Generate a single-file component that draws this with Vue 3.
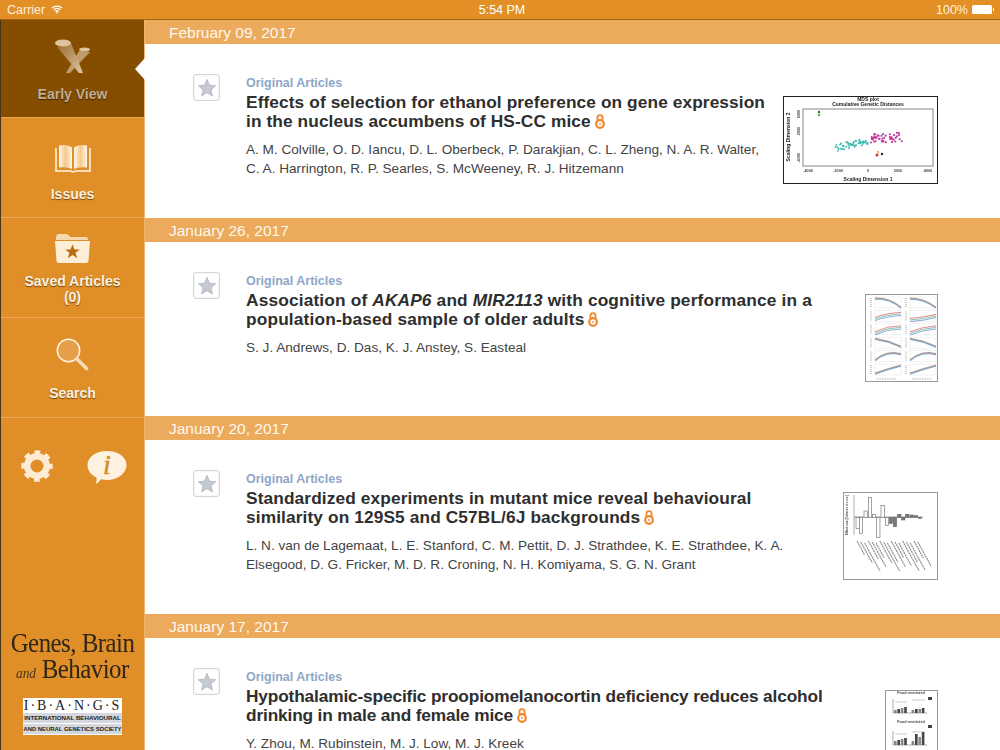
<script setup>
const articles = [
  { date: 'February 09, 2017', title: ['Effects of selection for ethanol preference on gene expression in the nucleus accumbens of HS-CC mice'], authors: 'A. M. Colville, O. D. Iancu, D. L. Oberbeck, P. Darakjian, C. L. Zheng, N. A. R. Walter, C. A. Harrington, R. P. Searles, S. McWeeney, R. J. Hitzemann', fig: 'mds' },
  { date: 'January 26, 2017', title: ['Association of ', 'AKAP6', ' and ', 'MIR2113', ' with cognitive performance in a population-based sample of older adults'], authors: 'S. J. Andrews, D. Das, K. J. Anstey, S. Easteal', fig: 'curves' },
  { date: 'January 20, 2017', title: ['Standardized experiments in mutant mice reveal behavioural similarity on 129S5 and C57BL/6J backgrounds'], authors: 'L. N. van de Lagemaat, L. E. Stanford, C. M. Pettit, D. J. Strathdee, K. E. Strathdee, K. A. Elsegood, D. G. Fricker, M. D. R. Croning, N. H. Komiyama, S. G. N. Grant', fig: 'bars' },
  { date: 'January 17, 2017', title: ['Hypothalamic-specific proopiomelanocortin deficiency reduces alcohol drinking in male and female mice'], authors: 'Y. Zhou, M. Rubinstein, M. J. Low, M. J. Kreek', fig: 'groups' }
]

const rnd = (i, s) => {
  const v = Math.sin(i * 12.9898 + s * 78.233) * 43758.5453
  return v - Math.floor(v)
}
const teal = Array.from({ length: 52 }, (_, i) => {
  const t = rnd(i, 1)
  return { x: 52 + t * 33, y: 52 - t * 7 + (rnd(i, 2) - 0.5) * 7 }
})
const magenta = Array.from({ length: 46 }, (_, i) => {
  const t = rnd(i, 3)
  return { x: 87 + t * 32, y: 43 - t * 2 + (rnd(i, 4) - 0.5) * 9 }
})

const curveRows = [
  ['M0 1Q14 0 26 10', 'M0 1Q14 1 26 10'],
  ['M0 7Q10 3 26 2', 'M0 8Q14 7 26 4'],
  ['M0 8Q12 2 26 2', 'M0 8Q12 3 26 2'],
  ['M0 1Q14 3 26 9', 'M0 1Q14 3 26 9'],
  ['M0 9Q12 -1 26 3', 'M0 9Q12 -1 26 3'],
  ['M0 9Q14 4 26 1', 'M0 9Q14 4 26 1']
]
const curvePanels = curveRows.flatMap((row, r) => row.map((d, c) => ({ x: 10 + c * 35, y: 3 + r * 13.4, d, spread: r === 1 || r === 2 ? 1.6 : 0.6 })))
const curveColours = ['#d8555f', '#4fb08f', '#5a86c8']

const barData = [
  [63, 130], [73, 145], [87, 78], [100, 38], [112, 88], [125, 157], [138, 62], [151, 122],
  [163, 115, 1], [175, 125, 1], [188, 88, 1], [200, 105, 1], [212, 88, 1], [225, 90, 1], [238, 92, 1], [250, 100, 1]
].map(([zx, zy, dark]) => ({
  x: zx / 3 - 8,
  y: Math.min(zy, 97) / 3 - 7,
  h: Math.abs(zy - 97) / 3,
  dark
}))
const labels = Array.from({ length: 17 }, (_, i) => ({ x: 14 + i * 3.8, y: 49 + (i % 3), len: 14 + ((i * 7) % 17) }))

const groupRows = [
  { base: 23, title: 4, legend: 7, bars: [3, 4, 5, 6, 3, 4, 4, 5] },
  { base: 55, title: 33, legend: 35, bars: [4, 5, 6, 7, 4, 11, 8, 13] }
]
</script>

<template>
  <div class="screen">
    <header class="status">
      <div class="status-left">
        <span>Carrier</span>
        <svg class="wifi" viewBox="0 0 14 10" width="12" height="9">
          <path d="M1 3.400a8.600 8.600 0 0 1 12 0M3 5.400a5.800 5.800 0 0 1 8 0M5 7.300a3 3 0 0 1 4 0" fill="none" stroke="#fff" stroke-width="1.500" />
          <path d="M7 10l-1.300-1.500a2 2 0 0 1 2.600 0z" fill="#fff" />
        </svg>
      </div>
      <div class="status-time">5:54 PM</div>
      <div class="status-right">
        <span>100%</span>
        <span class="battery"></span>
      </div>
    </header>

    <div class="body">
      <aside class="side">
        <div class="nav nav-active">
          <svg viewBox="0 0 36 36" width="36" height="36">
            <defs>
              <linearGradient id="beam" x1="0" y1="0" x2="1" y2="1">
                <stop offset="0" stop-color="#99682c" />
                <stop offset="1" stop-color="#dfc6a4" />
              </linearGradient>
            </defs>
            <path d="M24 13L35 14L15 35H11z" fill="#d8bd98" opacity=".7" />
            <path d="M2 9L16 5L28 35H24z" fill="url(#beam)" />
            <ellipse cx="8" cy="5" rx="8" ry="3.600" fill="#dcc3a0" />
            <ellipse cx="29.500" cy="11.500" rx="5.500" ry="2.100" fill="#dcc3a0" />
          </svg>
          <span class="nav-label">Early View</span>
          <span class="notch"></span>
        </div>
        <div class="nav nav-issues">
          <svg viewBox="0 0 36 30" width="36" height="30">
            <defs>
              <linearGradient id="page" x1="0" y1="0" x2="1" y2="0">
                <stop offset="0" stop-color="#fff6e8" />
                <stop offset=".5" stop-color="#f8c98c" />
                <stop offset="1" stop-color="#fff6e8" />
              </linearGradient>
            </defs>
            <path d="M4 1.500Q12 0 17 3.500V25Q12 22.500 4 23.500z" fill="url(#page)" />
            <path d="M19 3.500Q24 0 32 1.500V23.500Q24 22.500 19 25z" fill="url(#page)" />
            <path d="M1 4V27H16Q18 29 20 27H35V4" fill="none" stroke="#fff3e2" stroke-width="1.600" />
          </svg>
          <span class="nav-label">Issues</span>
        </div>
        <div class="nav nav-saved">
          <svg viewBox="0 0 35 30" width="35" height="30">
            <path d="M1 5Q1 1 4 1H12L15.500 4H31Q33 4 33 7H1z" fill="#f5d8ac" />
            <path d="M0 8H35L33.500 28Q33.400 30 31 30H4Q1.600 30 1.500 28z" fill="#fdeed8" />
            <path d="M17.500 11.500l2 5h5.300l-4.300 3.300 1.700 5.400-4.700-3.300-4.700 3.300 1.700-5.400-4.300-3.300h5.300z" fill="#b96c0c" />
          </svg>
          <span class="nav-label">Saved Articles<br />(0)</span>
        </div>
        <div class="nav nav-search">
          <svg viewBox="0 0 33 33" width="33" height="33">
            <circle cx="12.500" cy="12.500" r="11.200" fill="#e69f49" stroke="#fff3e2" stroke-width="1.500" />
            <path d="M21 21L30.500 30.500" stroke="#f8dcb8" stroke-width="3.600" stroke-linecap="round" />
          </svg>
          <span class="nav-label">Search</span>
        </div>
        <div class="tools">
          <svg viewBox="0 0 32 32" width="32" height="32">
            <circle cx="16" cy="16" r="9.750" fill="none" stroke="#fdebd4" stroke-width="6.500" />
            <circle cx="16" cy="16" r="13.500" fill="none" stroke="#fdebd4" stroke-width="4.500" stroke-dasharray="5.600 5" stroke-dashoffset="2.800" />
          </svg>
          <svg viewBox="0 0 40 36" width="40" height="36">
            <path d="M20 1C31 1 39.500 7 39.500 15S31 30 20 30Q17 30 14 29.300Q12 32.500 8.500 34Q10 31 9.500 27.500C4 25 .5 20.500 .5 15C.5 7 9 1 20 1z" fill="#fdf1e0" />
            <text x="20" y="24" text-anchor="middle" class="info-i">i</text>
          </svg>
        </div>
        <div class="brand">
          <div class="brand-line">Genes, Brain</div>
          <div class="brand-line"><i>and</i> Behavior</div>
          <div class="ibangs">
            <div class="ibangs-name">I·B·A·N·G·S</div>
            <div class="ibangs-sub sub-one">INTERNATIONAL BEHAVIOURAL</div>
            <div class="ibangs-sub sub-two">AND NEURAL GENETICS SOCIETY</div>
          </div>
        </div>
      </aside>

      <main class="list">
        <section v-for="a in articles" :key="a.date" class="group">
          <h2 class="date">{{ a.date }}</h2>
          <article class="article" :class="'article-' + a.fig">
            <button class="star" aria-label="Save article">
              <svg viewBox="0 0 22 22" width="20" height="20">
                <path d="M11 1.500l2.700 6.400 6.900.6-5.200 4.500 1.600 6.800L11 16.200 5 19.800l1.600-6.800L1.400 8.500l6.900-.6z" fill="#c5cad2" stroke="#a9afba" stroke-width=".8" />
              </svg>
            </button>
            <div class="text">
              <div class="kind">Original Articles</div>
              <h3 class="title">
                <template v-for="(part, i) in a.title" :key="i">
                  <i v-if="i % 2 === 1">{{ part }}</i>
                  <template v-else>{{ part }}</template>
                </template>
                <svg class="lock" viewBox="0 0 10 15" width="10" height="15">
                  <path d="M2.400 7V3.800a2.600 2.600 0 0 1 5.200 0V7" fill="none" stroke="#f0892c" stroke-width="1.800" />
                  <circle cx="5" cy="10" r="3.800" fill="none" stroke="#f0892c" stroke-width="2.200" />
                  <circle cx="5" cy="10" r=".9" fill="#f0892c" />
                </svg>
              </h3>
              <p class="authors">{{ a.authors }}</p>
            </div>

            <figure class="fig" :class="'fig-' + a.fig">
              <svg v-if="a.fig === 'mds'" viewBox="0 0 155 88" width="155" height="88">
                <g class="soft">
                  <text x="85" y="4.500" class="t-b" text-anchor="middle">MDS plot</text>
                  <text x="85" y="9.500" class="t-b" text-anchor="middle">Cumulative Genetic Distances</text>
                  <rect x="20" y="13" width="130" height="57" fill="none" stroke="#aaa" stroke-width="1.400" />
                  <circle v-for="(p, i) in teal" :key="'t' + i" :cx="p.x" :cy="p.y" r="1" fill="#3fbdb0" />
                  <circle v-for="(p, i) in magenta" :key="'m' + i" :cx="p.x" :cy="p.y" r="1.100" fill="#c23c9e" />
                  <circle cx="36" cy="16" r="1.200" fill="#2d6b2d" />
                  <circle cx="36" cy="19" r="1.300" fill="#52c23c" />
                  <circle cx="94" cy="59" r="1.500" fill="#e03030" />
                  <circle cx="95" cy="56" r="1" fill="#f09030" />
                  <circle cx="99" cy="58" r="1.200" fill="#222" />
                  <circle cx="100" cy="38" r="1.100" fill="#4060c0" />
                  <text x="85" y="85" class="t-b" text-anchor="middle">Scaling Dimension 1</text>
                  <text transform="translate(7 41) rotate(-90)" class="t-b" text-anchor="middle">Scaling Dimension 2</text>
                  <text x="25" y="76" class="t" text-anchor="middle">-4000</text>
                  <text x="55" y="76" class="t" text-anchor="middle">-2000</text>
                  <text x="85" y="76" class="t" text-anchor="middle">0</text>
                  <text x="115" y="76" class="t" text-anchor="middle">2000</text>
                  <text x="145" y="76" class="t" text-anchor="middle">4000</text>
                  <text transform="translate(17 18) rotate(-90)" class="t" text-anchor="middle">6000</text>
                  <text transform="translate(17 35) rotate(-90)" class="t" text-anchor="middle">2000</text>
                  <text transform="translate(17 62) rotate(-90)" class="t" text-anchor="middle">-4000</text>
                </g>
              </svg>

              <svg v-else-if="a.fig === 'curves'" viewBox="0 0 73 88" width="73" height="88">
                <g class="soft">
                  <g v-for="(p, i) in curvePanels" :key="i" :transform="`translate(${p.x} ${p.y})`">
                    <rect width="26" height="11" fill="none" stroke="#e2e2e2" stroke-width=".5" />
                    <path v-for="(c, j) in curveColours" :key="j" :d="p.d" :transform="`translate(0 ${j * p.spread})`" fill="none" :stroke="c" stroke-width=".7" />
                    <path d="M-4 1V10" stroke="#999" stroke-width="1" stroke-dasharray="1 1" />
                  </g>
                  <path d="M12 85H32M47 85H67" stroke="#aaa" stroke-width="1" stroke-dasharray="1.500 1" />
                </g>
              </svg>

              <svg v-else-if="a.fig === 'bars'" viewBox="0 0 95 88" width="95" height="88">
                <g class="soft">
                  <path d="M11 3V43" stroke="#777" stroke-width=".6" />
                  <text transform="translate(5 23) rotate(-90)" class="t-small" text-anchor="middle">Effect size (Cohen's d ± s.e.)</text>
                  <path d="M11 25H80" stroke="#555" stroke-width=".6" />
                  <rect v-for="(b, i) in barData" :key="'b' + i" :x="b.x" :y="b.y" width="3.300" :height="b.h" :fill="b.dark ? '#777' : '#fff'" stroke="#666" stroke-width=".6" />
                  <path v-for="(l, i) in labels" :key="'l' + i" :d="`M${l.x} ${l.y}l${l.len * .55} ${l.len}`" stroke="#888" stroke-width="1.100" stroke-dasharray="2 .6" />
                </g>
              </svg>

              <svg v-else viewBox="0 0 53 88" width="53" height="88">
                <g class="soft">
                  <g v-for="row in groupRows" :key="row.base">
                    <text x="26" :y="row.title" class="t" text-anchor="middle">Food restricted</text>
                    <path :d="`M8 ${row.base - 14}V${row.base}H42`" fill="none" stroke="#777" stroke-width=".6" />
                    <rect v-for="(h, i) in row.bars" :key="i" :x="(i < 4 ? 9 : 13) + i * 3.400" :y="row.base - h" width="2.600" :height="h" :fill="i % 2 ? '#444' : '#888'" />
                    <path :d="`M10 ${row.base - 11}H22M27 ${row.base - 13}H40`" stroke="#999" stroke-width=".5" />
                    <rect x="43" :y="row.legend" width="4" height="3" fill="#444" />
                  </g>
                </g>
              </svg>
            </figure>
          </article>
        </section>
      </main>
    </div>
  </div>
</template>

<style scoped>
.screen {
  width: 1000px;
  height: 750px;
  overflow: hidden;
  display: flex;
  flex-direction: column;
  background: #fff;
  font-family: "Liberation Sans", Arial, sans-serif;
}

.status {
  height: 19px;
  flex: none;
  display: flex;
  align-items: center;
  justify-content: space-between;
  padding: 0 7px;
  background: #e28f25;
  border-bottom: 1px solid #a5620f;
  color: #fdf0df;
  font-size: 12.500px;
}
.status-left { display: flex; align-items: center; gap: 6px; width: 200px; }
.wifi { margin-top: -1px; }
.status-time { color: #fff; margin-left: 4px; }
.status-right { display: flex; align-items: center; justify-content: flex-end; gap: 4px; width: 200px; }
.battery {
  width: 20px;
  height: 9px;
  background: #fff;
  border-radius: 1.500px;
  position: relative;
  margin-right: 1px;
}
.battery::after {
  content: "";
  position: absolute;
  right: -2px;
  top: 3px;
  width: 1.500px;
  height: 3px;
  background: #fff;
}

.body { flex: 1; min-height: 0; display: flex; }

.side {
  width: 145px;
  flex: none;
  display: flex;
  flex-direction: column;
  background: #e08e27;
  border-left: 1px solid #4a3415;
  border-right: 1px solid #f0b672;
  box-sizing: border-box;
}
.nav {
  position: relative;
  height: 100px;
  flex: none;
  box-sizing: border-box;
  border-bottom: 1px solid #eaa858;
  display: flex;
  flex-direction: column;
  align-items: center;
}
.nav svg { flex: none; }
.nav-active { height: 98px; padding-top: 18px; gap: 12px; background: #844d00; }
.nav-issues { padding-top: 26px; gap: 12px; }
.nav-saved { padding-top: 15px; gap: 10px; }
.nav-search { padding-top: 20px; gap: 14px; }
.nav-label {
  font-size: 14px;
  line-height: 16px;
  font-weight: 700;
  text-align: center;
  color: #fdf1e0;
  text-shadow: 0 1px 1px rgba(90, 50, 0, .8);
}
.nav-active .nav-label { color: #c2ad92; text-shadow: 0 1px 1px rgba(40, 20, 0, .7); }
.notch {
  position: absolute;
  right: -1px;
  top: 38px;
  width: 0;
  height: 0;
  border-style: solid;
  border-width: 11px 10px 11px 0;
  border-color: transparent #fff transparent transparent;
}

.tools {
  display: flex;
  align-items: flex-start;
  justify-content: space-between;
  padding: 32px 17px 0 20px;
}
.info-i {
  font-family: "Liberation Serif", serif;
  font-style: italic;
  font-size: 28px;
  fill: #d98a26;
  stroke: #d98a26;
  stroke-width: .5px;
}

.brand {
  margin-top: auto;
  padding-bottom: 15px;
  display: flex;
  flex-direction: column;
  align-items: center;
  font-family: "Liberation Serif", serif;
  color: #2f2618;
}
.brand-line {
  white-space: nowrap;
  font-size: 28px;
  line-height: 26px;
  letter-spacing: -.6px;
  transform: scaleX(.89);
}
.brand-line i { font-size: 15px; letter-spacing: 0; color: #4a3418; }
.ibangs {
  margin-top: 12px;
  width: 99px;
  background: #fff;
  color: #222;
  text-align: center;
  padding: 1px 0;
  box-sizing: border-box;
  overflow: hidden;
}
.ibangs-name { font-size: 14px; line-height: 13px; letter-spacing: 2px; }
.ibangs-sub {
  font-family: "Liberation Sans", sans-serif;
  font-weight: 700;
  line-height: 10px;
  background: #d4d8de;
  margin-top: 1px;
  white-space: nowrap;
}
.sub-one { font-size: 6.200px; }
.sub-two { font-size: 5.900px; }

.list { flex: 1; min-width: 0; }
.group { height: 198px; display: flex; flex-direction: column; }
.date {
  margin: 0;
  height: 24px;
  flex: none;
  padding: 1px 0 0 24px;
  box-sizing: border-box;
  background: #ebaa5c;
  color: #fff8ee;
  font-size: 15.500px;
  font-weight: 400;
  line-height: 23px;
}
.article {
  flex: 1;
  min-height: 0;
  display: flex;
  align-items: flex-start;
  padding: 30px 62px 0 48px;
  box-sizing: border-box;
}
.star {
  width: 27px;
  height: 27px;
  flex: none;
  margin-right: 26px;
  padding: 0;
  display: flex;
  align-items: center;
  justify-content: center;
  background: #fff;
  border: 1px solid #d3d5d9;
  border-radius: 3px;
  box-shadow: inset 0 0 3px rgba(0, 0, 0, .08);
}
.text { flex: 1; min-width: 0; padding-right: 16px; }
.kind {
  font-size: 12.500px;
  line-height: 16px;
  font-weight: 700;
  color: #8fa6c6;
  margin-top: 1px;
}
.title {
  margin: 2px 0 0;
  font-size: 17.300px;
  line-height: 19px;
  font-weight: 700;
  color: #2e2e2e;
}
.article-mds .title { letter-spacing: .1px; }
.article-curves .title { letter-spacing: .16px; }
.article-bars .title { letter-spacing: .12px; }
.article-groups .title { letter-spacing: -.15px; }
.lock { vertical-align: -2px; margin-left: 4px; }
.authors {
  margin: 9px 0 0;
  font-size: 13.600px;
  line-height: 19px;
  color: #444;
}
.fig {
  margin: 22px 0 0;
  flex: none;
  outline: 1px solid #222;
  outline-offset: -1px;
  height: 88px;
  line-height: 0;
  background: #fff;
}
.fig svg { display: block; }
.fig-curves, .fig-bars, .fig-groups { outline-color: #999; }
.soft { filter: blur(.55px); }
.t { font-family: "Liberation Sans", sans-serif; font-size: 3.800px; font-weight: 700; fill: #444; }
.t-small { font-family: "Liberation Sans", sans-serif; font-size: 3px; font-weight: 700; fill: #444; }
.t-b { font-family: "Liberation Sans", sans-serif; font-size: 5px; font-weight: 700; fill: #222; }
</style>
